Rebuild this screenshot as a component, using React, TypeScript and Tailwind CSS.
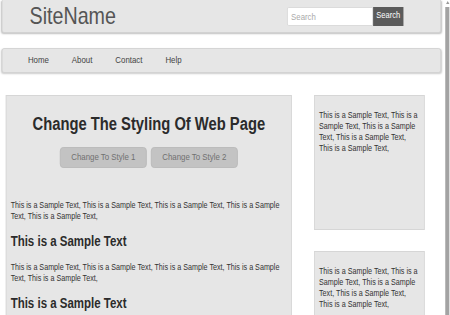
const sample =
  'This is a Sample Text, This is a Sample Text, This is a Sample Text, This is a Sample Text, This is a Sample Text,';

export default function App() {
  return (
    <div className="h-[315px] w-[450px] overflow-hidden bg-white antialiased">
      {/* page is drawn at 549px and squeezed horizontally, like the reference capture */}
      <div className="flex h-[315px] w-[549px] origin-top-left scale-x-[0.82] font-['Liberation_Sans',Arial,sans-serif]">
        <div className="w-[540px] shrink-0">
          {/* Header */}
          <header className="mx-[2px] flex h-[33px] items-center justify-between rounded-b-[3px] border-x border-b border-[#d2d2d2] bg-[#e6e6e6] pl-[33px] pr-[45px] shadow-[0_1px_2px_rgba(0,0,0,0.25)]">
            <span className="text-[24px] leading-none text-[#555]">SiteName</span>
            <div className="flex h-[19px]">
              <input
                placeholder="Search"
                className="h-[19px] w-[105px] rounded-l-[2px] border border-[#d8d8d8] bg-white px-[4px] text-[9.5px] text-[#555] outline-none placeholder:text-[#aaa]"
              />
              <button className="h-[19px] w-[37px] bg-[#5b5b5b] text-[9.2px] text-white">Search</button>
            </div>
          </header>

          {/* Nav */}
          <nav className="mx-[2px] mt-[15px] flex h-[25px] items-center gap-[28px] rounded-[3px] border border-[#d2d2d2] bg-[#e6e6e6] pl-[31px] text-[9.6px] text-[#444] shadow-[0_1px_2px_rgba(0,0,0,0.2)]">
            <a>Home</a>
            <a>About</a>
            <a>Contact</a>
            <a>Help</a>
          </nav>

          {/* Main */}
          <div className="mt-[22px] flex gap-[27px] pl-[7px]">
            <main className="h-[260px] w-[349px] shrink-0 border border-[#d6d6d6] bg-[#e6e6e6] px-[5px] pt-[18px] text-[#333]">
              <h1 className="text-center text-[18px] font-bold leading-[20px] text-[#2b2b2b]">
                Change The Styling Of Web Page
              </h1>
              <div className="mt-[13px] flex justify-center gap-[5px]">
                <button className="h-[21px] w-[106px] rounded-[4px] border border-[#b9b9b9] bg-[#c3c3c3] text-[9.6px] text-[#707070]">
                  Change To Style 1
                </button>
                <button className="h-[21px] w-[106px] rounded-[4px] border border-[#b9b9b9] bg-[#c3c3c3] text-[9.6px] text-[#707070]">
                  Change To Style 2
                </button>
              </div>
              <p className="mt-[32px] text-[8.75px] leading-[11px]">{sample}</p>
              <h2 className="mt-[11px] text-[14px] font-bold leading-[17px] text-[#2b2b2b]">This is a Sample Text</h2>
              <p className="mt-[12px] text-[8.75px] leading-[11px]">{sample}</p>
              <h2 className="mt-[11px] text-[14px] font-bold leading-[17px] text-[#2b2b2b]">This is a Sample Text</h2>
            </main>

            <aside className="flex w-[135px] shrink-0 flex-col gap-[21px]">
              <div className="h-[135px] border border-[#d6d6d6] bg-[#e6e6e6] px-[5px] pt-[14px] text-[8.75px] leading-[11px] text-[#333]">
                {sample}
              </div>
              <div className="h-[135px] border border-[#d6d6d6] bg-[#e6e6e6] px-[5px] pt-[14px] text-[8.75px] leading-[11px] text-[#333]">
                {sample}
              </div>
            </aside>
          </div>
        </div>

        {/* Scrollbar */}
        <div className="flex w-[9px] shrink-0 flex-col items-end pr-[1px]">
          <div className="mt-[1px] h-0 w-0 border-x-[2px] border-b-[3px] border-x-transparent border-b-[#999]" />
          <div className="mt-[3px] w-[5px] flex-1 bg-[#a3a3a3]" />
        </div>
      </div>
    </div>
  );
}
